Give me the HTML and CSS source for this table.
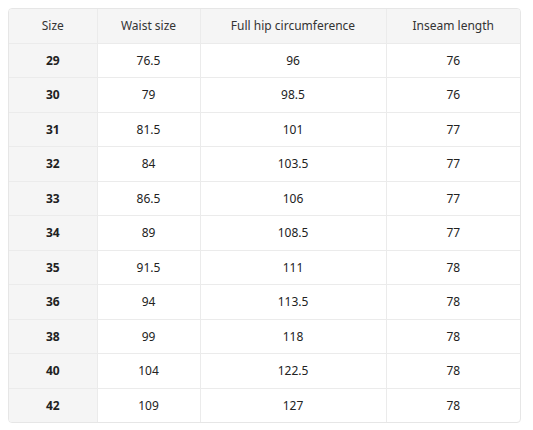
FILE: index.html
```html
<!DOCTYPE html>
<html>
<head>
<meta charset="utf-8">
<link rel="stylesheet" href="styles.css">
</head>
<body>
<div class="wrap">
<table class="size-table">
<colgroup><col class="c1"><col class="c2"><col class="c3"><col class="c4"></colgroup>
<thead>
<tr><th>Size</th><th>Waist size</th><th>Full hip circumference</th><th>Inseam length</th></tr>
</thead>
<tbody>
<tr><td class="sz">29</td><td>76.5</td><td>96</td><td>76</td></tr>
<tr><td class="sz">30</td><td>79</td><td>98.5</td><td>76</td></tr>
<tr><td class="sz">31</td><td>81.5</td><td>101</td><td>77</td></tr>
<tr><td class="sz">32</td><td>84</td><td>103.5</td><td>77</td></tr>
<tr><td class="sz">33</td><td>86.5</td><td>106</td><td>77</td></tr>
<tr><td class="sz">34</td><td>89</td><td>108.5</td><td>77</td></tr>
<tr><td class="sz">35</td><td>91.5</td><td>111</td><td>78</td></tr>
<tr><td class="sz">36</td><td>94</td><td>113.5</td><td>78</td></tr>
<tr><td class="sz">38</td><td>99</td><td>118</td><td>78</td></tr>
<tr><td class="sz">40</td><td>104</td><td>122.5</td><td>78</td></tr>
<tr><td class="sz">42</td><td>109</td><td>127</td><td>78</td></tr>
</tbody>
</table>
</div>
</body>
</html>
```
FILE: styles.css
```css
html, body { margin: 0; padding: 0; background: #fff; }
body { padding: 8px; font-family: "Noto Sans", "Open Sans", sans-serif; color: #222; }
.wrap {
  width: 511px;
  border: 1px solid #e6e6e6;
  border-radius: 4px;
  overflow: hidden;
}
.size-table {
  width: 511px;
  border-collapse: collapse;
  table-layout: fixed;
  font-size: 12px;
}
.c1 { width: 88px; }
.c2 { width: 103px; }
.c3 { width: 186px; }
.c4 { width: 134px; }
.size-table th, .size-table td {
  height: 33.5px;
  padding: 0;
  text-align: center;
  vertical-align: middle;
  border-right: 1px solid #ebebeb;
  border-bottom: 1px solid #ebebeb;
}
.size-table th:last-child, .size-table td:last-child { border-right: none; }
.size-table tbody tr:last-child td { border-bottom: none; }
.size-table th { background: #f5f5f5; font-weight: 400; color: #333; }
.size-table td.sz { background: #f5f5f5; font-weight: 700; }
```
